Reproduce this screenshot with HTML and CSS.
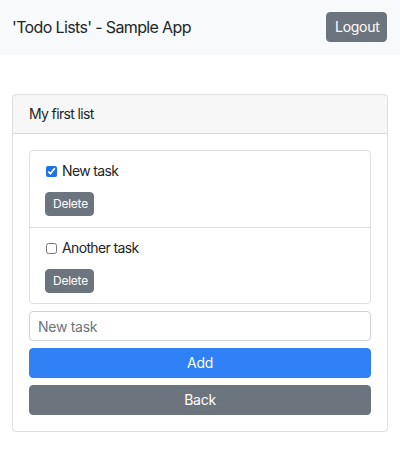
FILE: index.html
```html
<!DOCTYPE html>
<html>
<head>
<meta charset="utf-8">
<link rel="stylesheet" href="styles.css">
</head>
<body>
<nav class="navbar">
  <span class="brand">'Todo Lists' - Sample App</span>
  <button class="btn btn-secondary btn-sm">Logout</button>
</nav>
<main class="main">
  <div class="card">
    <div class="card-header">My first list</div>
    <div class="card-body">
      <ul class="list-group">
        <li class="list-item">
          <label class="task"><input type="checkbox" checked> New task</label>
          <button class="btn btn-secondary btn-xs">Delete</button>
        </li>
        <li class="list-item">
          <label class="task"><input type="checkbox"> Another task</label>
          <button class="btn btn-secondary btn-xs">Delete</button>
        </li>
      </ul>
      <input class="form-control" type="text" placeholder="New task">
      <button class="btn btn-primary btn-block">Add</button>
      <button class="btn btn-secondary btn-block">Back</button>
    </div>
  </div>
</main>
</body>
</html>
```
FILE: styles.css
```css
* { box-sizing: border-box; }
body {
  margin: 0;
  font-family: Inter, "Noto Sans", "Liberation Sans", sans-serif;
  letter-spacing: -0.04em;
  color: #212529;
  background: #fff;
}
.navbar {
  display: flex;
  justify-content: space-between;
  align-items: center;
  height: 55px;
  padding: 0 13px 1px 12px;
  background: #f8f9fa;
}
.brand {
  font-size: 16px;
  line-height: 24px;
}
.btn {
  font-family: inherit;
  letter-spacing: -0.02em;
  border: 1px solid transparent;
  border-radius: 4px;
  color: #fff;
  cursor: pointer;
}
.btn-secondary { background: #6c757d; border-color: #6c757d; }
.btn-primary { background: #3080f6; border-color: #3080f6; }
.btn-sm {
  font-size: 14px;
  line-height: 20px;
  padding: 4px 8px;
  height: 30px;
  width: 61px;
}
.btn-xs {
  font-size: 12px;
  line-height: 16px;
  padding: 3px 7px;
  height: 24px;
  width: 49px;
  margin-left: -1px;
  display: block;
}
.btn-block {
  display: block;
  width: 100%;
  font-size: 14px;
  line-height: 20px;
  padding: 4px 8px;
  height: 30px;
  margin-top: 7px;
}
.main {
  padding: 39px 12px 0;
}
.card {
  border: 1px solid rgba(0,0,0,.125);
  border-radius: 4px;
}
.card-header {
  background: rgba(0,0,0,.03);
  border-bottom: 1px solid rgba(0,0,0,.125);
  padding: 8px 16px 9px;
  font-size: 14px;
  line-height: 21px;
}
.card-body {
  padding: 16px;
}
.list-group {
  list-style: none;
  margin: 0;
  padding: 0;
  border: 1px solid rgba(0,0,0,.125);
  border-radius: 4px;
}
.list-item {
  padding: 10px 16px;
  height: 76px;
}
.list-item + .list-item {
  border-top: 1px solid rgba(0,0,0,.125);
  height: 76px;
}
.task {
  display: flex;
  align-items: center;
  font-size: 14px;
  line-height: 20px;
  height: 20px;
  margin-bottom: 11px;
}
.task input {
  width: 11px;
  height: 11px;
  margin: 0 5px 0 0;
  accent-color: #1a73e8;
}
.form-control {
  display: block;
  width: 100%;
  margin-top: 7px;
  height: 30px;
  padding: 4px 8px;
  font-family: inherit;
  letter-spacing: -0.02em;
  font-size: 14px;
  line-height: 20px;
  color: #495057;
  border: 1px solid #ced4da;
  border-radius: 4px;
}
.form-control::placeholder { color: #6c757d; }
```
